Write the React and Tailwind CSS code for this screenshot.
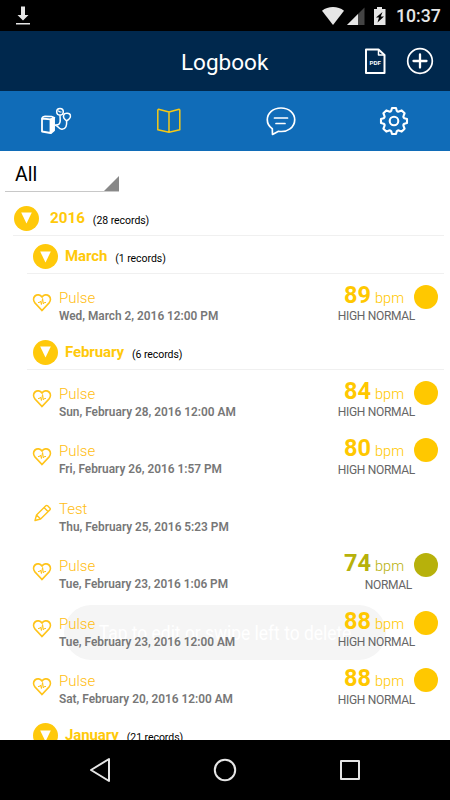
import React from "react";

const sections = [
  {
    month: "March",
    count: 1,
    records: [
      { type: "Pulse", date: "Wed, March 2, 2016 12:00 PM", bpm: 89, status: "HIGH NORMAL" },
    ],
  },
  {
    month: "February",
    count: 6,
    records: [
      { type: "Pulse", date: "Sun, February 28, 2016 12:00 AM", bpm: 84, status: "HIGH NORMAL" },
      { type: "Pulse", date: "Fri, February 26, 2016 1:57 PM", bpm: 80, status: "HIGH NORMAL" },
      { type: "Test", date: "Thu, February 25, 2016 5:23 PM" },
      { type: "Pulse", date: "Tue, February 23, 2016 1:06 PM", bpm: 74, status: "NORMAL" },
      { type: "Pulse", date: "Tue, February 23, 2016 12:00 AM", bpm: 88, status: "HIGH NORMAL" },
      { type: "Pulse", date: "Sat, February 20, 2016 12:00 AM", bpm: 88, status: "HIGH NORMAL" },
    ],
  },
  { month: "January", count: 21, records: [] },
];

function StatusBar() {
  return (
    <div className="flex h-[31px] shrink-0 items-center bg-black pl-[15px] pr-[10px] text-[#e6e6e6]">
      <svg className="-mt-px" width="16" height="20" viewBox="0 0 16 20" fill="currentColor">
        <path d="M6 1.500h4V10h3.500L8 15.500 2.500 10H6zM1 18h14v1.600H1z" />
      </svg>
      <svg className="ml-auto" width="24" height="20" viewBox="0 0 24 20" fill="currentColor">
        <path d="M1 4.800C7-.2 17-.2 23 4.800L12 19z" />
      </svg>
      <svg className="ml-px" width="20" height="20" viewBox="0 0 20 20">
        <path d="M1 19L18.500 1.500V19z" fill="#444" />
        <path d="M1 19L12 8v11z" fill="currentColor" />
      </svg>
      <svg className="ml-[7px]" width="14" height="20" viewBox="0 0 14 20">
        <path d="M4 1h5v2h3.500v16H1V3h3z" fill="currentColor" />
        <path d="M9.500 6L3 11.500h3L4.500 16.500 11 10.500H7.800z" fill="#000" />
      </svg>
      <span className="ml-[9px] w-[44px] whitespace-nowrap pt-px text-[17.700px] font-medium leading-[20px]">10:37</span>
    </div>
  );
}

function Header() {
  return (
    <header className="flex h-[60px] shrink-0 items-center bg-[#00284d] pl-[181px] pr-[16px] text-white">
      <h1 className="whitespace-nowrap pt-[2px] text-[22.500px] leading-[30px]">Logbook</h1>
      <svg className="ml-auto" width="24" height="28" viewBox="0 0 24 28" fill="none" stroke="currentColor" strokeWidth="2" strokeLinejoin="round">
        <path d="M3 2.500h12.500L21.500 8V26H3z" />
        <path d="M15.500 2.500V8h6" strokeWidth="1.500" />
        <text x="12.300" y="17.800" textAnchor="middle" fontSize="6.200" fontWeight="700" fill="currentColor" stroke="none">PDF</text>
      </svg>
      <svg className="ml-[19px]" width="28" height="28" viewBox="0 0 28 28" fill="none" stroke="currentColor">
        <circle cx="14" cy="14" r="12.300" strokeWidth="1.700" />
        <path d="M14 7.500v13M7.500 14h13" strokeWidth="2.300" strokeLinecap="round" />
      </svg>
    </header>
  );
}

function TabBar() {
  return (
    <nav className="grid h-[60px] shrink-0 grid-cols-4 place-items-center bg-[#106cb8] text-white">
      <svg width="34" height="30" viewBox="0 0 34 30" fill="none" stroke="currentColor" strokeWidth="1.500" strokeLinejoin="round">
        <path d="M3 12.500l8.500.8V27L3 25.500z" strokeWidth="1.800" />
        <path d="M3 12.500Q3.500 10.500 6 10.300l6.500.2 3 1.300-4 1.500" />
        <path d="M11.800 13.500L15.200 12v12.500L12 27.300z" fill="currentColor" />
        <circle cx="21" cy="5.800" r="3.300" />
        <path d="M19 4.800l2 1.200h1.500" strokeWidth="1.100" />
        <path d="M21 9.300c0 4.500 1.200 7.200-1.200 9-1 .8-2.600.6-3.800.7M16 19.300c3-.4 3.200 4.200 7 4 4-.3 5-3.800 4.600-8.500" />
        <path d="M27.600 14.800c-2.400-1.600-3.700-3.500-2.900-5.700.9-2.500 6.200-2.300 6.700.3.500 2.200-1.800 4.500-3.800 5.400z" />
      </svg>
      <svg width="26" height="28" viewBox="0 0 26 28" fill="none" stroke="#f5c916" strokeWidth="1.500" strokeLinejoin="round">
        <path d="M13 5L2.500 2.300 1.800 3v19.800L13 25.300l10.800-2.500V3l-.7-.7zM13 5v20.300" />
      </svg>
      <svg width="30" height="30" viewBox="0 0 30 30" fill="none" stroke="currentColor" strokeWidth="1.700" strokeLinejoin="round" strokeLinecap="round">
        <path d="M15 2C7 2 1.300 7 1.300 13.800c0 3.800 1.900 6.900 5 9L6.500 28.500l6-3.200c9 1.300 16.200-4 16.200-11.500C28.700 7 23 2 15 2z" />
        <path d="M8.500 12h13M10 17.500h9" />
      </svg>
      <svg width="30" height="30" viewBox="0 0 30 30" fill="none" stroke="currentColor" strokeWidth="2.100" strokeLinejoin="round">
        <path d="M13 2h4L17.700 4.600Q18.800 6.200 20.500 5.300L22.700 4.400 25.600 7.300 24.700 9.500Q23.800 11.200 25.400 12.300L28 13v4L25.400 17.700Q23.800 18.800 24.700 20.500L25.600 22.700 22.700 25.600 20.500 24.700Q18.800 23.800 17.700 25.400L17 28h-4L12.300 25.400Q11.200 23.800 9.500 24.700L7.300 25.600 4.400 22.700 5.300 20.500Q6.200 18.800 4.600 17.700L2 17v-4L4.600 12.300Q6.200 11.200 5.300 9.500L4.400 7.300 7.300 4.400 9.500 5.300Q11.200 6.200 12.300 4.600z" />
        <circle cx="15" cy="15" r="4.300" />
      </svg>
    </nav>
  );
}

function Toggle() {
  return (
    <span className="flex h-[25px] w-[25px] shrink-0 items-center justify-center rounded-full bg-[#ffc90a]">
      <svg width="11" height="12" viewBox="0 0 11 12" fill="#fff">
        <path d="M.2.500h10.600L5.500 11.500z" />
      </svg>
    </span>
  );
}

function HeartIcon() {
  return (
    <svg width="20" height="19" viewBox="0 0 20 19" fill="none" stroke="#ffc41a" strokeLinejoin="round">
      <path d="M10 17.500L3 10C1.200 7.800 1.200 4.700 3 3c2.200-2 5.200-1.300 7 1 1.800-2.300 4.800-3 7-1 1.800 1.700 1.800 4.800 0 7z" strokeWidth="1.800" />
      <path d="M6 9.500h1.500l1-1.500.9 3.500L10.600 5.500l.8 5.500.9-1.500H14" strokeWidth="1" />
    </svg>
  );
}

function PencilIcon() {
  return (
    <svg width="20" height="19" viewBox="0 0 20 19" fill="none" stroke="#ffc41a" strokeWidth="1.400" strokeLinejoin="round">
      <path d="M3 16.500L4.500 11 13.800 1.800Q14.700 1 15.600 1.800L18 4.200Q18.600 5 18 5.800L8.600 15zM4.500 11L8.600 15M12 3.500L16.200 7.700" />
    </svg>
  );
}

function RecordRow({ record }) {
  const normal = record.status === "NORMAL";
  return (
    <li className="flex h-[57.500px] items-start pl-[32px] pr-[12px]">
      <div className="w-[20px] shrink-0 pt-[19px]">
        {record.type === "Pulse" ? <HeartIcon /> : <PencilIcon />}
      </div>
      <div className="ml-[7px] whitespace-nowrap pt-[13.600px]">
        <div className="text-[15px] font-light leading-[20px] text-[#ffbd12]">{record.type}</div>
        <div className="text-[11.850px] font-semibold leading-[17.500px] text-[#777]">{record.date}</div>
      </div>
      {record.bpm && (
        <div className="ml-auto flex">
          <div className="flex flex-col items-end pt-[7.500px]">
            <div className={`mr-[10px] whitespace-nowrap leading-[26px] ${normal ? "text-[#b7b10b]" : "text-[#ffc800]"}`}>
              <span className="text-[23.500px] font-bold">{record.bpm}</span>
              <span className="ml-[4px] text-[14.500px] font-light">bpm</span>
            </div>
            <div
              className={`-mt-[3.500px] whitespace-nowrap text-[12px] leading-[16px] tracking-[-0.300px] text-[#666] ${normal ? "mr-[2px]" : "mr-[-1px]"}`}
            >
              {record.status}
            </div>
          </div>
          <span className={`mt-[10.700px] h-[24px] w-[24px] rounded-full ${normal ? "bg-[#b7b10b]" : "bg-[#ffc800]"}`} />
        </div>
      )}
    </li>
  );
}

function MonthSection({ section }) {
  return (
    <section>
      <div className="flex h-[38.400px] items-start pl-[33px] pt-[8px]">
        <Toggle />
        <span className="ml-[7px] whitespace-nowrap text-[15px] font-bold leading-[25px] tracking-[-0.100px] text-[#ffc90a]">
          {section.month}
        </span>
        <span className="ml-[8px] whitespace-nowrap pt-[2px] text-[10.500px] leading-[25px] tracking-[-0.050px] text-black">
          ({section.count} records)
        </span>
      </div>
      <div className="-mt-px ml-[27px] mr-[6px] h-px bg-[#f0f0f0]" />
      <ul>
        {section.records.map((record) => (
          <RecordRow key={record.date} record={record} />
        ))}
      </ul>
    </section>
  );
}

function NavigationBar() {
  return (
    <div className="flex h-[60px] shrink-0 items-center justify-center gap-[99px] bg-black">
      <svg width="26" height="26" viewBox="0 0 26 26" fill="none" stroke="#e6e6e6" strokeWidth="2" strokeLinejoin="round">
        <path d="M22 2v22L4 13z" />
      </svg>
      <svg width="26" height="26" viewBox="0 0 26 26" fill="none" stroke="#e6e6e6" strokeWidth="2">
        <circle cx="13" cy="13" r="10.200" />
      </svg>
      <svg width="26" height="26" viewBox="0 0 26 26" fill="none" stroke="#e6e6e6" strokeWidth="2" strokeLinejoin="round">
        <path d="M4 4h18v18H4z" />
      </svg>
    </div>
  );
}

export default function App() {
  return (
    <div className="relative flex h-[800px] w-[450px] flex-col overflow-hidden bg-white font-['Roboto',sans-serif]">
      {/* toast almost faded out, the rows stay readable through it */}
      <div className="absolute left-[64px] top-[605px] flex h-[55px] w-[322px] items-center justify-center rounded-full bg-[#f5f5f5]">
        <span className="scale-x-[0.87] whitespace-nowrap text-[20px] text-white">Tap to edit or swipe left to delete</span>
      </div>

      <StatusBar />
      <Header />
      <TabBar />
      <main className="relative min-h-0 flex-1 overflow-hidden">
        <div className="ml-[5px] flex h-[41px] w-[114px] items-end justify-between border-b border-[#c8c8c8]">
          <span className="pb-[3px] pl-[10px] text-[19.500px] leading-[26px] text-black">All</span>
          <svg width="15" height="15" viewBox="0 0 15 15" fill="#888">
            <path d="M15 0v15H0z" />
          </svg>
        </div>
        <div className="flex h-[43px] items-start pl-[14px] pt-[13.500px]">
          <Toggle />
          <span className="ml-[11px] text-[15.200px] font-bold leading-[25px] text-[#ffc90a]">2016</span>
          <span className="ml-[8px] whitespace-nowrap pt-[2px] text-[10.500px] leading-[25px] tracking-[-0.050px] text-black">
            (28 records)
          </span>
        </div>
        <div className="ml-[13px] mr-[6px] h-px bg-[#f0f0f0]" />
        {sections.map((section) => (
          <MonthSection key={section.month} section={section} />
        ))}
      </main>
      <NavigationBar />
    </div>
  );
}
